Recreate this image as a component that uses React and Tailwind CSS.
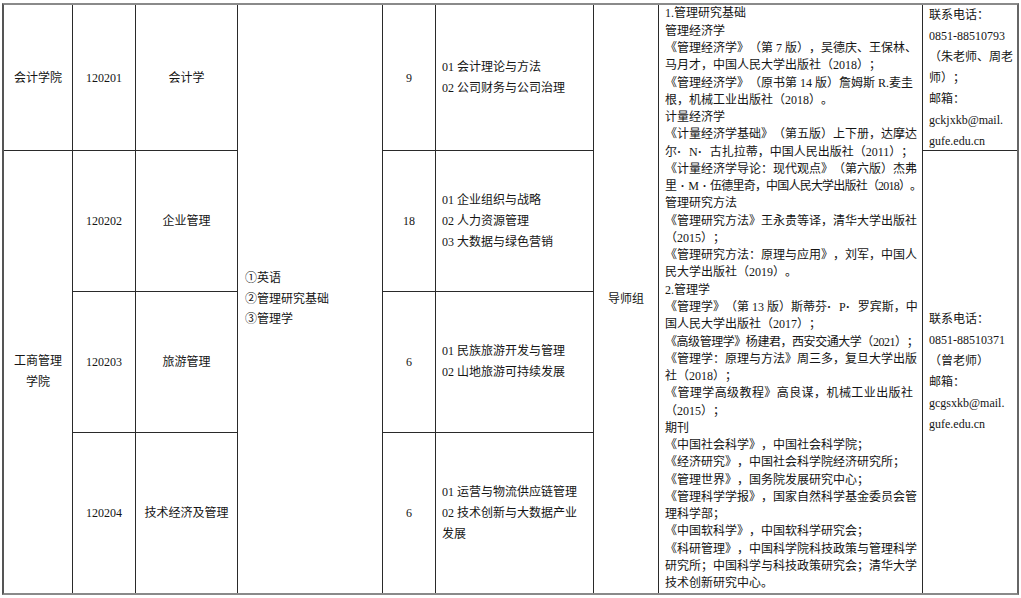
import React from "react";

const D = ({ t }) => {
  const parts = t.split("·");
  const out = [];
  parts.forEach((p, i) => {
    if (i > 0)
      out.push(
        <span key={"d" + i} className="inline-block w-[12px] text-center font-bold">
          ·
        </span>
      );
    out.push(<span key={"p" + i}>{p}</span>);
  });
  return <>{out}</>;
};

const refs = [
  ["1.管理研究基础", 0],
  ["管理经济学", 0],
  ["《管理经济学》（第 7 版），吴德庆、王保林、", 1],
  ["马月才，中国人民大学出版社（2018）；", 0],
  ["《管理经济学》（原书第 14 版）詹姆斯 R.麦圭", 1],
  ["根，机械工业出版社（2018）。", 0],
  ["计量经济学", 0],
  ["《计量经济学基础》（第五版）上下册，达摩达", 1],
  ["尔·N·古扎拉蒂，中国人民出版社（2011）；", 1],
  ["《计量经济学导论：现代观点》（第六版）杰弗", 1],
  ["里·M·伍德里奇，中国人民大学出版社（2018）。", 2],
  ["管理研究方法", 0],
  ["《管理研究方法》王永贵等译，清华大学出版社", 1],
  ["（2015）；", 0],
  ["《管理研究方法：原理与应用》，刘军，中国人", 1],
  ["民大学出版社（2019）。", 0],
  ["2.管理学", 0],
  ["《管理学》（第 13 版）斯蒂芬·P·罗宾斯，中", 1],
  ["国人民大学出版社（2017）；", 0],
  ["《高级管理学》杨建君，西安交通大学（2021）；", 3],
  ["《管理学：原理与方法》周三多，复旦大学出版", 1],
  ["社（2018）；", 0],
  ["《管理学高级教程》高良谋，机械工业出版社", 1],
  ["（2015）；", 0],
  ["期刊", 0],
  ["《中国社会科学》，中国社会科学院；", 0],
  ["《经济研究》，中国社会科学院经济研究所；", 0],
  ["《管理世界》，国务院发展研究中心；", 0],
  ["《管理科学学报》，国家自然科学基金委员会管", 1],
  ["理科学部；", 0],
  ["《中国软科学》，中国软科学研究会；", 0],
  ["《科研管理》，中国科学院科技政策与管理科学", 1],
  ["研究所；中国科学与科技政策研究会；清华大学", 1],
  ["技术创新研究中心。", 0],
];

const C = "border-[#2a2a2a] flex items-center justify-center text-center";

export default function App() {
  return (
    <div className="w-[1021px] h-[598px] bg-white overflow-hidden pt-[3px] pl-[2px]">
      <div
        lang="zh-CN"
        className="w-[1017px] border-2 border-t-[#8a8a8a] border-b-[#8a8a8a] border-l-[#555] border-r-[#666] grid grid-cols-[69px_63px_102px_145px_53px_158px_65px_264px_94px] grid-rows-[146px_141px_141px_160px] text-[12px] text-[#151515] font-['Liberation_Serif','Noto_Sans_CJK_SC',serif] [text-spacing-trim:space-all]"
      >
        {/* col 1 */}
        <div className={`${C} col-start-1 row-start-1 border-r border-b`}>会计学院</div>
        <div className={`${C} col-start-1 row-start-2 row-span-3 border-r flex-col leading-[21px]`}>
          <div>工商管理</div>
          <div>学院</div>
        </div>

        {/* col 2 */}
        <div className={`${C} col-start-2 row-start-1 border-r border-b`}>120201</div>
        <div className={`${C} col-start-2 row-start-2 border-r border-b`}>120202</div>
        <div className={`${C} col-start-2 row-start-3 border-r border-b`}>120203</div>
        <div className={`${C} col-start-2 row-start-4 border-r`}>120204</div>

        {/* col 3 */}
        <div className={`${C} col-start-3 row-start-1 border-r border-b`}>会计学</div>
        <div className={`${C} col-start-3 row-start-2 border-r border-b`}>企业管理</div>
        <div className={`${C} col-start-3 row-start-3 border-r border-b`}>旅游管理</div>
        <div className={`${C} col-start-3 row-start-4 border-r`}>技术经济及管理</div>

        {/* col 4 */}
        <div className="col-start-4 row-start-1 row-span-4 border-r border-[#2a2a2a] flex flex-col justify-center pl-[7px] leading-[20.5px]">
          <div>①英语</div>
          <div>②管理研究基础</div>
          <div>③管理学</div>
        </div>

        {/* col 5 */}
        <div className={`${C} col-start-5 row-start-1 border-r border-b`}>9</div>
        <div className={`${C} col-start-5 row-start-2 border-r border-b`}>18</div>
        <div className={`${C} col-start-5 row-start-3 border-r border-b`}>6</div>
        <div className={`${C} col-start-5 row-start-4 border-r`}>6</div>

        {/* col 6 */}
        <div className="col-start-6 row-start-1 border-r border-b border-[#2a2a2a] flex flex-col justify-center pl-[6px] leading-[21px]">
          <div>01 会计理论与方法</div>
          <div>02 公司财务与公司治理</div>
        </div>
        <div className="col-start-6 row-start-2 border-r border-b border-[#2a2a2a] flex flex-col justify-center pl-[6px] leading-[21px]">
          <div>01 企业组织与战略</div>
          <div>02 人力资源管理</div>
          <div>03 大数据与绿色营销</div>
        </div>
        <div className="col-start-6 row-start-3 border-r border-b border-[#2a2a2a] flex flex-col justify-center pl-[6px] leading-[21px]">
          <div>01 民族旅游开发与管理</div>
          <div>02 山地旅游可持续发展</div>
        </div>
        <div className="col-start-6 row-start-4 border-r border-[#2a2a2a] flex flex-col justify-center pl-[6px] leading-[21px]">
          <div>01 运营与物流供应链管理</div>
          <div>02 技术创新与大数据产业</div>
          <div>发展</div>
        </div>

        {/* col 7 */}
        <div className={`${C} col-start-7 row-start-1 row-span-4 border-r`}>导师组</div>

        {/* col 8 */}
        <div className="col-start-8 row-start-1 row-span-4 border-r border-[#2a2a2a] flex flex-col justify-center pl-[6px] pr-[9px] leading-[17.27px]">
          {refs.map(([t, j], i) => (
            <div
              key={i}
              className={
                j === 1
                  ? "whitespace-nowrap text-justify [text-align-last:justify]"
                  : j === 2
                  ? "whitespace-nowrap tracking-[-0.8px]"
                  : j === 3
                  ? "whitespace-nowrap tracking-[-0.45px]"
                  : "whitespace-nowrap"
              }
            >
              <D t={t} />
            </div>
          ))}
        </div>

        {/* col 9 */}
        <div className="col-start-9 row-start-1 border-b border-[#2a2a2a] flex flex-col pl-[6px] leading-[21px]">
          <div>联系电话：</div>
          <div>0851-88510793</div>
          <div>（朱老师、周老</div>
          <div>师）；</div>
          <div>邮箱：</div>
          <div>gckjxkb@mail.</div>
          <div>gufe.edu.cn</div>
        </div>
        <div className="col-start-9 row-start-2 row-span-3 flex flex-col justify-center pl-[6px] leading-[21px]">
          <div>联系电话：</div>
          <div>0851-88510371</div>
          <div>（曾老师）</div>
          <div>邮箱：</div>
          <div>gcgsxkb@mail.</div>
          <div>gufe.edu.cn</div>
        </div>
      </div>
    </div>
  );
}
